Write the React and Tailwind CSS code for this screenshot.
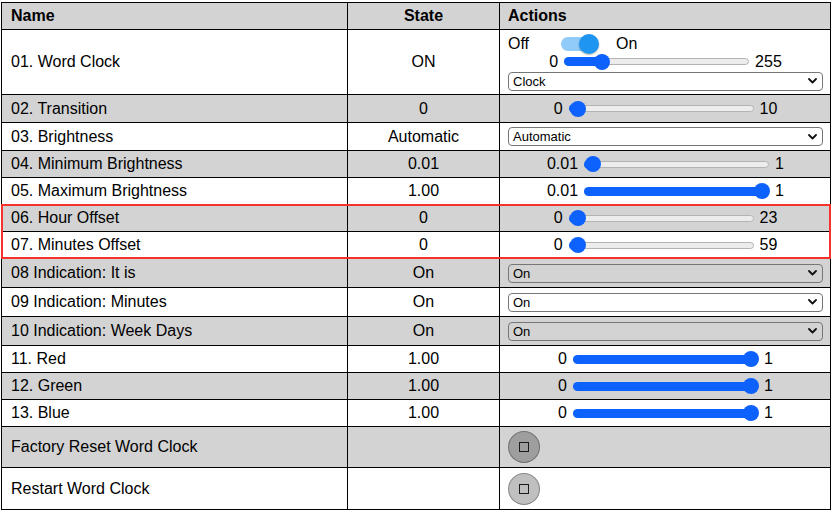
import React from 'react';

const COLS = 'grid grid-cols-[346px_152px_331px]';

function Slider({ lo, hi, value }) {
  // thumb travels inside the track, 16px knob
  const left = 8 + value * (185 - 16);
  return (
    <div className="flex items-center justify-center gap-[6px] w-full">
      <span>{lo}</span>
      <div className="relative w-[185px] h-[7px] rounded-full bg-[#ececec] border border-[#b3b3b3]">
        <div
          className="absolute -left-[1px] -top-[2px] -bottom-[2px] rounded-full bg-[#0d61fc]"
          style={{ width: left + 1 }}
        />
        <div
          className="absolute top-1/2 w-4 h-4 -translate-x-1/2 -translate-y-1/2 rounded-full bg-[#0d61fc]"
          style={{ left }}
        />
      </div>
      <span>{hi}</span>
    </div>
  );
}

function Select({ label }) {
  return (
    <div className="flex w-full h-[19px] items-center justify-between rounded-[4px] border border-[#767676] pl-[4px] pr-[5px] text-[13px] leading-none">
      <span>{label}</span>
      <svg width="9" height="6" viewBox="0 0 9 6" fill="none">
        <path d="M1 1l3.5 3.5L8 1" stroke="#111" strokeWidth="1.8" strokeLinecap="round" strokeLinejoin="round" />
      </svg>
    </div>
  );
}

function WordClockActions() {
  return (
    <div className="flex flex-col justify-center w-full">
      <div className="flex items-center h-[20px]">
        <span>Off</span>
        <div className="relative ml-[32px] w-[36px] h-[14px] rounded-full bg-[#90cbf9]">
          <div className="absolute -right-[2px] top-1/2 -translate-y-1/2 w-5 h-5 rounded-full bg-[#1e96f1] shadow-[0_1px_2px_rgba(0,0,0,0.3)]" />
        </div>
        <span className="ml-[19px]">On</span>
      </div>
      <div className="flex items-center h-[16px]">
        <Slider lo="0" hi="255" value={0.17} />
      </div>
      <div className="mt-[2px]">
        <Select label="Clock" />
      </div>
    </div>
  );
}

function RoundButton() {
  return (
    <div className="flex items-center justify-center w-8 h-8 rounded-full bg-black/25 border border-black/30">
      <div className="w-[10px] h-[10px] border border-[#1a1a1a]" />
    </div>
  );
}

const rows = [
  { name: '01. Word Clock', state: 'ON', h: 'h-[65px]', action: <WordClockActions /> },
  { name: '02. Transition', state: '0', h: 'h-[28px]', action: <Slider lo="0" hi="10" value={0} /> },
  { name: '03. Brightness', state: 'Automatic', h: 'h-[28px]', action: <Select label="Automatic" /> },
  { name: '04. Minimum Brightness', state: '0.01', h: 'h-[27px]', action: <Slider lo="0.01" hi="1" value={0} /> },
  { name: '05. Maximum Brightness', state: '1.00', h: 'h-[27px]', action: <Slider lo="0.01" hi="1" value={1} /> },
  { name: '06. Hour Offset', state: '0', h: 'h-[27px]', action: <Slider lo="0" hi="23" value={0} /> },
  { name: '07. Minutes Offset', state: '0', h: 'h-[27px]', action: <Slider lo="0" hi="59" value={0} /> },
  { name: '08 Indication: It is', state: 'On', h: 'h-[29px]', action: <Select label="On" /> },
  { name: '09 Indication: Minutes', state: 'On', h: 'h-[29px]', action: <Select label="On" /> },
  { name: '10 Indication: Week Days', state: 'On', h: 'h-[29px]', action: <Select label="On" /> },
  { name: '11. Red', state: '1.00', h: 'h-[27px]', action: <Slider lo="0" hi="1" value={1} /> },
  { name: '12. Green', state: '1.00', h: 'h-[27px]', action: <Slider lo="0" hi="1" value={1} /> },
  { name: '13. Blue', state: '1.00', h: 'h-[27px]', action: <Slider lo="0" hi="1" value={1} /> },
  { name: 'Factory Reset Word Clock', state: '', h: 'h-[41px]', action: <RoundButton /> },
  { name: 'Restart Word Clock', state: '', h: 'h-[42px]', action: <RoundButton /> },
];

export default function App() {
  return (
    <div className="min-h-screen bg-white pl-[1px] pt-[2px] font-['Liberation_Sans',Arial,sans-serif] text-base text-black">
      <div className="relative w-[830px] border-l border-t border-black">
        {/* header */}
        <div className={`${COLS} h-[27px] border-b border-black bg-[#d3d3d3] font-bold`}>
          <div className="flex items-center pl-[9px] border-r border-black">Name</div>
          <div className="flex items-center justify-center border-r border-black">State</div>
          <div className="flex items-center pl-[8px] border-r border-black">Actions</div>
        </div>

        {rows.map((r, i) => (
          <div
            key={r.name}
            className={`${COLS} ${r.h} border-b border-black ${i % 2 === 1 ? 'bg-[#d3d3d3]' : 'bg-white'}`}
          >
            <div className="flex items-center pl-[9px] border-r border-black">{r.name}</div>
            <div className="flex items-center justify-center border-r border-black">{r.state}</div>
            <div className="flex items-center pl-[8px] pr-[7px] border-r border-black">{r.action}</div>
          </div>
        ))}

        {/* highlight around the offset rows */}
        <div className="absolute -left-[1px] top-[201px] w-[830px] h-[55px] border-2 border-[#f2322b] pointer-events-none" />
      </div>
    </div>
  );
}
